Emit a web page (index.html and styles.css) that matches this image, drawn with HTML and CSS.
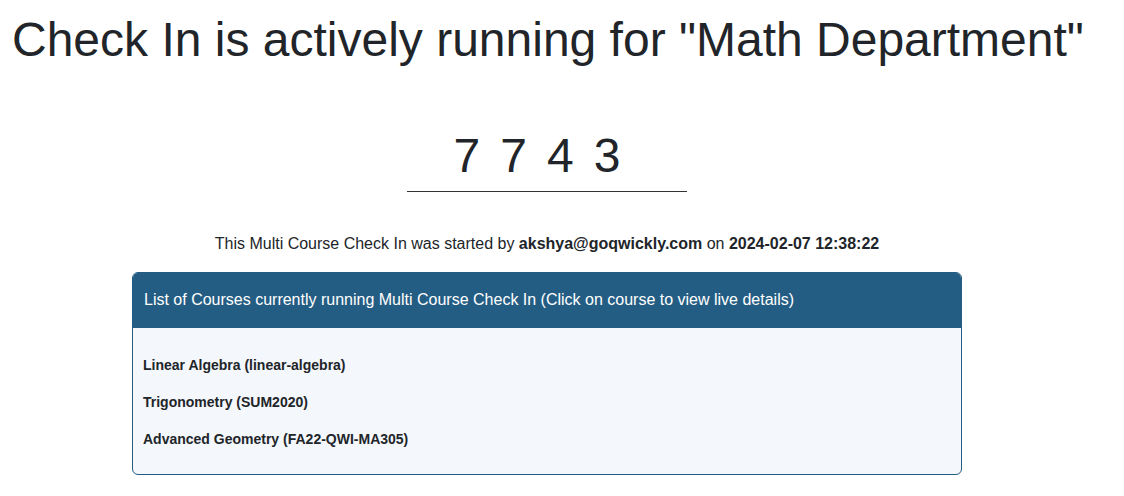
FILE: index.html
```html
<!DOCTYPE html>
<html>
<head>
<meta charset="utf-8">
<link rel="stylesheet" href="styles.css">
</head>
<body>
<div class="page">
  <h1 class="title">Check In is actively running for "Math Department"</h1>
  <div class="code-wrap">
    <div class="code">7743</div>
  </div>
  <p class="started">This Multi Course Check In was started by <b>akshya@goqwickly.com</b> on <b>2024-02-07 12:38:22</b></p>
  <div class="card">
    <div class="card-header">List of Courses currently running Multi Course Check In (Click on course to view live details)</div>
    <div class="card-body">
      <div class="course">Linear Algebra (linear-algebra)</div>
      <div class="course">Trigonometry (SUM2020)</div>
      <div class="course">Advanced Geometry (FA22-QWI-MA305)</div>
    </div>
  </div>
</div>
</body>
</html>
```

FILE: styles.css
```css
html, body {
  margin: 0;
  padding: 0;
  background: #fff;
}
body {
  font-family: "Liberation Sans", Arial, sans-serif;
  color: #212529;
}
.page {
  width: 1094px;
  padding-top: 11px;
}
.title {
  margin: 0 0 0 12px;
  font-size: 48px;
  font-weight: 400;
  line-height: 1.2;
}
.code-wrap {
  display: flex;
  justify-content: center;
  margin-top: 58px;
}
.code {
  width: 280px;
  text-align: center;
  font-size: 48px;
  line-height: 58px;
  letter-spacing: 20px;
  border-bottom: 1px solid #333;
  padding-bottom: 6px;
}
.started {
  text-align: center;
  font-size: 16px;
  line-height: 19px;
  margin: 42px 0 0;
}
.card {
  width: 828px;
  margin: 19px auto 0;
  border: 1px solid #245d83;
  border-radius: 6px;
  overflow: hidden;
  background: #f4f7fc;
}
.card-header {
  background: #245d83;
  color: #fff;
  font-size: 16px;
  height: 55px;
  box-sizing: border-box;
  padding: 18px 11px 0;
}
.card-body {
  padding: 29px 10px 27px;
  display: flex;
  flex-direction: column;
  gap: 21px;
}
.course {
  font-size: 14px;
  font-weight: 700;
  line-height: 16px;
}
```
